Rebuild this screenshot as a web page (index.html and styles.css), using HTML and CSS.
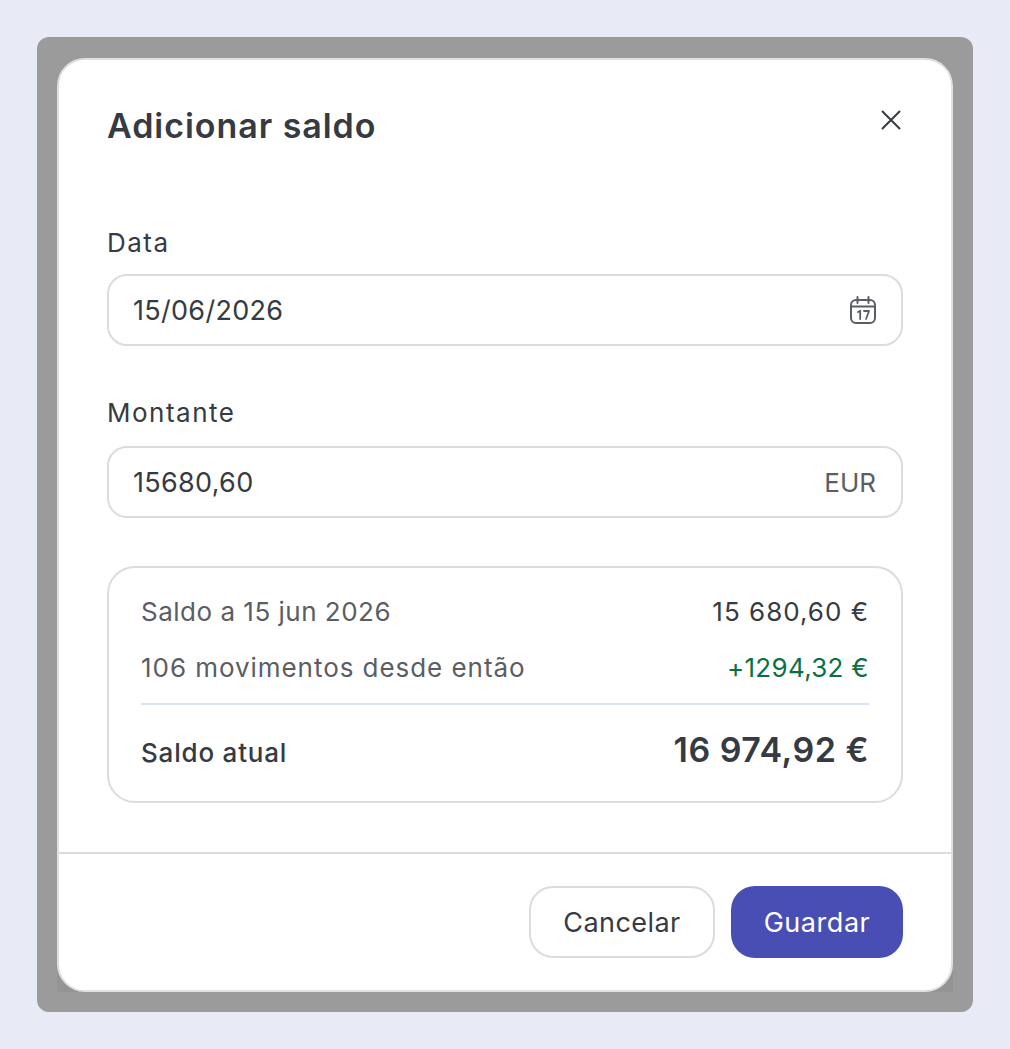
FILE: index.html
```html
<!DOCTYPE html>
<html lang="pt">
<head>
  <meta charset="UTF-8" />
  <meta name="viewport" content="width=device-width, initial-scale=1.0"/>
  <title>Adicionar saldo</title>
  <link rel="stylesheet" href="styles.css">
</head>
<body>
  <div class="backdrop">
    <div class="sheet">
      <div class="modal">
        <div class="modal-body">
          <div class="modal-head">
            <h2>Adicionar saldo</h2>
            <button class="close" aria-label="Fechar">
              <svg width="24" height="24" viewBox="0 0 24 24" fill="none" stroke="#363a42" stroke-width="2" stroke-linecap="round"><path d="M3.5 3.5l17 17M20.5 3.5l-17 17"/></svg>
            </button>
          </div>

          <label class="label">Data</label>
          <div class="field">
            <span>15/06/2026</span>
            <svg class="cal" width="28" height="30" viewBox="0 0 28 30" fill="none" stroke="#5a5d64" stroke-width="2" stroke-linecap="round"><rect x="2" y="5" width="24" height="23" rx="5"/><path d="M2 11.5h24M8.5 2v6M19.5 2v6"/><path d="M9 17l2.2-1.2V24M15 16h5l-3 8" stroke-width="1.8" stroke-linejoin="round"/></svg>
          </div>

          <label class="label label-second">Montante</label>
          <div class="field field-second">
            <span>15680,60</span>
            <span class="unit">EUR</span>
          </div>

          <div class="summary">
            <div class="row">
              <span class="muted">Saldo a 15 jun 2026</span>
              <span class="amount">15 680,60 €</span>
            </div>
            <div class="row row-second">
              <span class="muted muted-wide">106 movimentos desde então</span>
              <span class="green">+1294,32 €</span>
            </div>
            <div class="row total">
              <span class="total-label">Saldo atual</span>
              <span class="total-value">16 974,92 €</span>
            </div>
          </div>
        </div>

        <div class="modal-foot">
          <button class="btn btn-ghost">Cancelar</button>
          <button class="btn btn-primary">Guardar</button>
        </div>
      </div>
    </div>
  </div>
</body>
</html>
```

FILE: styles.css
```css
* { box-sizing: border-box; }
body { margin: 0; height: 1049px; background: #e8eaf5; font-family: Inter, "Noto Sans", sans-serif; color: #363a42; overflow: hidden; }
.backdrop { width: 936px; height: 975px; margin: 37px 0 0 37px; padding: 21px 20px; background: #9b9b9b; border-radius: 12px; }
.sheet { width: 896px; height: 934px; background: #949494; border-radius: 28px 28px 0 0; }
.modal { width: 896px; height: 934px; background: #fff; border: 2px solid #e0e0e0; border-radius: 28px; display: flex; flex-direction: column; }
.modal-body { flex: 1; padding: 0 48px; }
.modal-head { display: flex; justify-content: space-between; align-items: center; height: 134px; padding-bottom: 3px; }
.modal-head h2 { margin: 0; font-size: 34px; font-weight: 600; letter-spacing: 0.95px; }
.close { background: none; border: none; padding: 0; margin: 0 0 12px 0; width: 24px; height: 24px; display: flex; cursor: pointer; }
.label { display: block; font-size: 26px; font-weight: 400; line-height: 34px; margin-top: 32px; letter-spacing: 1.5px; }
.label-second { margin-top: 50px; }
.field { display: flex; justify-content: space-between; align-items: center; height: 72px; margin-top: 14px; padding: 0 25px 0 24px; border: 2px solid #dcdcdc; border-radius: 20px; font-size: 27px; font-weight: 400; letter-spacing: 0.3px; }
.field-second { margin-top: 16px; }
.cal { margin-right: -1px; }
.unit { color: #5a5d64; font-size: 26px; letter-spacing: 0; }
.summary { margin-top: 48px; height: 237px; padding: 26px 32px 0; border: 2px solid #dcdcdc; border-radius: 28px; font-size: 26px; font-weight: 400; }
.row { display: flex; justify-content: space-between; align-items: center; line-height: 36px; }
.row-second { margin-top: 20px; }
.muted { color: #5a5d64; letter-spacing: 0.5px; }
.muted-wide { letter-spacing: 0.95px; }
.amount { letter-spacing: 1px; }
.green { color: #0a7043; letter-spacing: 0.3px; }
.total { align-items: baseline; margin-top: 17px; padding-top: 22px; border-top: 2px solid #d6e6f5; line-height: 46px; }
.total-label { font-weight: 500; letter-spacing: 0.8px; }
.total-value { font-size: 34px; font-weight: 600; letter-spacing: 0.5px; }
.modal-foot { display: flex; justify-content: flex-end; gap: 16px; height: 138px; padding: 32px 48px 0; border-top: 2px solid #dcdcdc; }
.btn { height: 72px; border-radius: 24px; font-family: inherit; font-size: 27px; font-weight: 400; cursor: pointer; }
.btn-ghost { width: 186px; background: #fff; color: #363a42; border: 2px solid #dcdcdc; letter-spacing: 0.45px; }
.btn-primary { width: 172px; background: #484eb4; color: #fff; border: none; letter-spacing: 0.55px; }
```
